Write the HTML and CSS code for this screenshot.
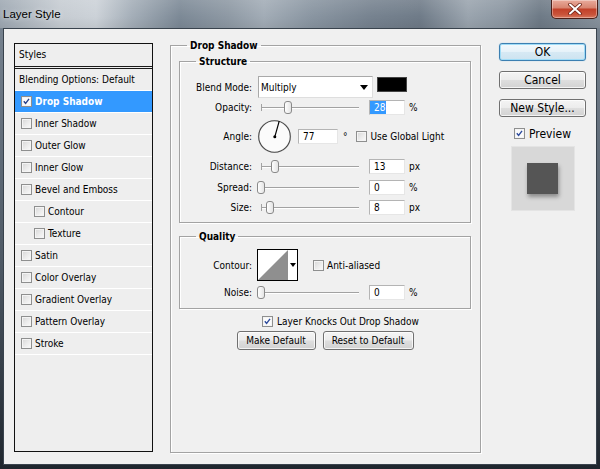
FILE: index.html
```html
<!DOCTYPE html>
<html lang="en">
<head>
<meta charset="utf-8">
<title>Layer Style</title>
<link rel="stylesheet" href="styles.css">
</head>
<body>
<div class="window">
  <div class="titlebar">
    <span class="title">Layer Style</span>
    <div class="close">
      <svg width="14" height="12" viewBox="0 0 14 12"><path d="M2 1.5 L12 10.5 M12 1.5 L2 10.5" stroke="#6a1f14" stroke-width="3.6" stroke-linecap="round"/><path d="M2 1.5 L12 10.5 M12 1.5 L2 10.5" stroke="#ffffff" stroke-width="2" stroke-linecap="round"/></svg>
    </div>
  </div>
  <div class="client">
    <div class="styles-panel">
      <div class="styles-head">Styles</div>
      <ul class="style-list">
        <li class="style-item plain">Blending Options: Default</li>
        <li class="style-item selected"><span class="cb checked"><svg viewBox="0 0 11 11"><path d="M2.2 5.2 L4.4 7.8 L8.6 2.2" fill="none" stroke="#26408b" stroke-width="1.7"/></svg></span>Drop Shadow</li>
        <li class="style-item"><span class="cb"></span>Inner Shadow</li>
        <li class="style-item"><span class="cb"></span>Outer Glow</li>
        <li class="style-item"><span class="cb"></span>Inner Glow</li>
        <li class="style-item"><span class="cb"></span>Bevel and Emboss</li>
        <li class="style-item indent"><span class="cb"></span>Contour</li>
        <li class="style-item indent"><span class="cb"></span>Texture</li>
        <li class="style-item"><span class="cb"></span>Satin</li>
        <li class="style-item"><span class="cb"></span>Color Overlay</li>
        <li class="style-item"><span class="cb"></span>Gradient Overlay</li>
        <li class="style-item"><span class="cb"></span>Pattern Overlay</li>
        <li class="style-item"><span class="cb"></span>Stroke</li>
      </ul>
    </div>

    <fieldset class="group main">
      <legend class="legend-main">Drop Shadow</legend>

      <fieldset class="group sub structure">
        <legend class="legend-sub">Structure</legend>
        <div class="row row-blend">
          <span class="lbl">Blend Mode:</span>
          <div class="select"><span>Multiply</span><span class="arrow"></span></div>
          <span class="swatch"></span>
        </div>
        <div class="row row-slider r-opacity">
          <span class="lbl">Opacity:</span>
          <div class="slider"><span class="thumb" style="left:23px"></span></div>
          <div class="num"><span class="sel">28</span></div>
          <span class="unit">%</span>
        </div>
        <div class="row row-angle">
          <span class="lbl">Angle:</span>
          <svg class="dial" width="35" height="35" viewBox="0 0 35 35"><circle cx="17.5" cy="17.5" r="16.6" fill="#c9c9c9"/><circle cx="17.5" cy="17.5" r="15.8" fill="#fbfbfb" stroke="#4a4a4a" stroke-width="1.1"/><line x1="17.8" y1="17.8" x2="22.2" y2="2.2" stroke="#000" stroke-width="1.2"/><circle cx="17.8" cy="17.8" r="1.5" fill="#000"/></svg>
          <div class="num num-angle">77</div>
          <span class="deg">°</span>
          <span class="cb cb-global"></span>
          <span class="cb-text">Use Global Light</span>
        </div>
        <div class="row row-slider r-distance">
          <span class="lbl">Distance:</span>
          <div class="slider"><span class="thumb" style="left:10px"></span></div>
          <div class="num">13</div>
          <span class="unit">px</span>
        </div>
        <div class="row row-slider r-spread">
          <span class="lbl">Spread:</span>
          <div class="slider"><span class="thumb" style="left:-4px"></span></div>
          <div class="num">0</div>
          <span class="unit">%</span>
        </div>
        <div class="row row-slider r-size">
          <span class="lbl">Size:</span>
          <div class="slider"><span class="thumb" style="left:5px"></span></div>
          <div class="num">8</div>
          <span class="unit">px</span>
        </div>
      </fieldset>

      <fieldset class="group sub quality">
        <legend class="legend-sub">Quality</legend>
        <div class="row row-contour">
          <span class="lbl">Contour:</span>
          <div class="contour">
            <svg width="30" height="30" viewBox="0 0 30 30"><rect width="30" height="30" fill="#fff"/><polygon points="0,30 30,0 30,30" fill="#8f8f8f"/></svg>
            <span class="contour-drop"><span class="arrow small"></span></span>
          </div>
          <span class="cb cb-anti"></span>
          <span class="cb-text">Anti-aliased</span>
        </div>
        <div class="row row-slider r-noise">
          <span class="lbl">Noise:</span>
          <div class="slider"><span class="thumb" style="left:-4px"></span></div>
          <div class="num">0</div>
          <span class="unit">%</span>
        </div>
      </fieldset>

      <div class="row knocks">
        <span class="cb checked"><svg viewBox="0 0 11 11"><path d="M2.2 5.2 L4.4 7.8 L8.6 2.2" fill="none" stroke="#2c4a9c" stroke-width="1.7"/></svg></span>
        <span class="cb-text">Layer Knocks Out Drop Shadow</span>
      </div>
      <div class="defaults">
        <button class="btn btn-make">Make Default</button>
        <button class="btn btn-reset">Reset to Default</button>
      </div>
    </fieldset>

    <div class="side">
      <button class="btn big ok">OK</button>
      <button class="btn big">Cancel</button>
      <button class="btn big">New Style...</button>
      <div class="preview-row">
        <span class="cb checked"><svg viewBox="0 0 11 11"><path d="M2.2 5.2 L4.4 7.8 L8.6 2.2" fill="none" stroke="#2c4a9c" stroke-width="1.7"/></svg></span>
        <span class="preview-text">Preview</span>
      </div>
      <div class="preview-box"><div class="preview-square"></div></div>
    </div>
  </div>
</div>
</body>
</html>
```

FILE: styles.css
```css
* { box-sizing: border-box; }

html, body {
  margin: 0;
  padding: 0;
}

body {
  width: 600px;
  height: 469px;
  overflow: hidden;
  font-family: "DejaVu Sans Condensed", "DejaVu Sans", sans-serif;
  font-size: 10px;
  color: #000;
  background: #2b333c;
}

.window {
  width: 600px;
  height: 469px;
  display: flex;
  flex-direction: column;
  background: linear-gradient(to bottom, #7b8794 0%, #4f5a66 55%, #1f262e 100%);
}

/* ---------- title bar ---------- */
.titlebar {
  flex: none;
  height: 28px;
  display: flex;
  justify-content: space-between;
  align-items: flex-start;
  background:
    linear-gradient(to bottom, rgba(255,255,255,0.12), rgba(255,255,255,0) 60%, rgba(0,0,0,0.06)),
    linear-gradient(90deg, #9ea8b2 0%, #c6ccd2 10%, #ccd2d8 16%, #a4aeb8 22%, #7c8996 30%, #8e99a4 38%, #a2acb6 44%, #8995a1 52%, #76828f 62%, #6f7b88 70%, #9aa4ae 78%, #8c97a2 84%, #6e7a86 90%, #87929d 100%);
}

.title {
  margin: 7px 0 0 3px;
  font-family: "Liberation Sans", Arial, sans-serif;
  font-size: 11.5px;
  line-height: 14px;
  color: #000;
  text-shadow: 0 0 5px rgba(255,255,255,0.7);
}

.close {
  width: 47px;
  height: 19px;
  margin-right: 2px;
  display: flex;
  align-items: center;
  justify-content: center;
  border: 1px solid #4b1f18;
  border-top: none;
  border-radius: 0 0 5px 5px;
  background: linear-gradient(to bottom, #e9ab9c 0%, #d88672 42%, #c2412a 52%, #c9533a 80%, #d8785e 100%);
  box-shadow: inset 0 0 0 1px rgba(255,255,255,0.35);
}

/* ---------- client area ---------- */
.client {
  flex: none;
  height: 437px;
  margin: 0 3px;
  border: 1px solid #39434d;
  background: #f0f0f0;
  display: flex;
  align-items: flex-start;
  padding: 10px 0 0 10px;
}

/* ---------- styles list ---------- */
.styles-panel {
  flex: none;
  width: 139px;
  height: 409px;
  margin-top: 4px;
  border: 1px solid #111;
  background: #eeeeee;
}

.styles-head {
  height: 25px;
  line-height: 22px;
  padding-left: 4px;
  border-bottom: 3px double #1a1a1a;
}

.style-list {
  list-style: none;
  margin: 0;
  padding: 0;
}

.style-item {
  height: 22px;
  display: flex;
  align-items: center;
  padding-left: 6px;
  border-bottom: 1px solid #ffffff;
  white-space: nowrap;
}

.style-item.plain { padding-left: 4px; }
.style-item.indent { padding-left: 19px; }

.style-item.selected {
  background: #3399ff;
  color: #fff;
  font-weight: bold;
}

.style-item .cb { margin-right: 3px; }

/* checkbox */
.cb {
  flex: none;
  display: inline-block;
  width: 11px;
  height: 11px;
  border: 1px solid #8e8f8f;
  background: linear-gradient(135deg, #d6d6d6 0%, #ececec 55%, #fafafa 100%);
  box-shadow: inset 0 0 0 1px #f4f4f4;
}

.cb svg {
  display: block;
  width: 9px;
  height: 9px;
}

.cb.checked {
  background: #fbfbfb;
}

.cb-text { white-space: nowrap; }

/* ---------- group boxes ---------- */
.group {
  margin: 0;
  min-width: 0;
  border: 1px solid #a3a3a3;
  box-shadow: 1px 1px 0 #ffffff, inset 1px 1px 0 #ffffff;
}

.group legend {
  font-weight: bold;
  line-height: 13px;
  height: 13px;
  padding: 0 3px;
  white-space: nowrap;
}

.main {
  flex: none;
  width: 311px;
  height: 414px;
  margin-left: 17px;
  padding: 3px 9px 0 8px;
}

.legend-main { margin-left: 8px; }
.legend-sub { margin-left: 16px; }

.sub { width: 292px; }

.structure { padding: 8px 0 7px 0; }

.quality {
  margin-top: 7px;
  padding: 6px 0 8px 0;
}

/* ---------- rows ---------- */
.row {
  display: flex;
  align-items: center;
  white-space: nowrap;
}

.lbl {
  flex: none;
  width: 72px;
  text-align: right;
}

.row-blend { height: 22px; }

.select {
  flex: none;
  width: 115px;
  height: 22px;
  margin-left: 6px;
  padding: 0 4px 0 2px;
  display: flex;
  align-items: center;
  justify-content: space-between;
  background: #fff;
  border: 1px solid;
  border-color: #a9a9a9 #dedede #dedede #a9a9a9;
}

.arrow {
  display: inline-block;
  width: 0;
  height: 0;
  border-top: 5px solid #000;
  border-left: 4px solid transparent;
  border-right: 4px solid transparent;
}

.arrow.small {
  border-top-width: 4px;
  border-left-width: 3px;
  border-right-width: 3px;
}

.swatch {
  flex: none;
  align-self: flex-start;
  width: 30px;
  height: 15px;
  margin: 1px 0 0 4px;
  background: #000;
  border: 1px solid #444;
}

.row-slider { height: 15px; }
.r-opacity { margin-top: 2px; }
.row-angle { height: 35px; margin-top: 4px; }
.r-distance { margin-top: 5px; }
.r-spread { margin-top: 6px; }
.r-size { margin-top: 5px; }
.r-noise { margin-top: 4px; }

.slider {
  flex: none;
  position: relative;
  width: 98px;
  height: 15px;
  margin-left: 9px;
}

.slider::before {
  content: "";
  position: absolute;
  left: 0;
  right: 0;
  top: 7px;
  height: 1px;
  background: #a2a2a2;
  box-shadow: 0 1px 0 #ffffff;
}

.slider::after {
  content: "";
  position: absolute;
  left: 0;
  top: 4px;
  width: 1px;
  height: 7px;
  background: #a2a2a2;
}

.thumb {
  position: absolute;
  top: 1px;
  width: 8px;
  height: 13px;
  border: 1px solid #8a8a8a;
  border-radius: 3px;
  background: linear-gradient(to right, #ffffff, #e4e4e4);
  z-index: 1;
}

.num {
  flex: none;
  width: 36px;
  height: 15px;
  margin-left: 10px;
  padding-left: 4px;
  line-height: 13px;
  background: #fff;
  border: 1px solid;
  border-color: #b4b4b4 #e6e6e6 #e6e6e6 #b4b4b4;
}

.num .sel {
  display: inline-block;
  margin-left: -4px;
  padding: 0 1px 0 4px;
  background: #3399ff;
  color: #fff;
}

.unit { margin-left: 4px; }

.dial {
  flex: none;
  margin-left: 5px;
}

.num-angle {
  width: 40px;
  margin-left: 6px;
}

.deg { margin-left: 5px; }

.cb-global { margin-left: 8px; }
.cb-global + .cb-text { margin-left: 4px; }

.row-contour { height: 32px; }

.contour {
  flex: none;
  display: flex;
  width: 41px;
  height: 32px;
  margin-left: 5px;
  border: 1px solid #000;
  background: #fff;
}

.contour svg { display: block; }

.contour-drop {
  flex: 1;
  display: flex;
  align-items: center;
  justify-content: center;
}

.cb-anti { margin-left: 15px; }
.cb-anti + .cb-text { margin-left: 3px; }

.knocks {
  height: 13px;
  margin: 6px 0 0 83px;
}

.knocks .cb-text { margin-left: 4px; }

.defaults {
  display: flex;
  justify-content: center;
  gap: 7px;
  margin-top: 3px;
}

/* ---------- buttons ---------- */
.btn {
  font-family: "DejaVu Sans Condensed", "DejaVu Sans", sans-serif;
  font-size: 10px;
  color: #000;
  height: 19px;
  padding: 0;
  border: 1px solid #707070;
  border-radius: 3px;
  background: linear-gradient(to bottom, #f4f4f4 0%, #ececec 48%, #dedede 52%, #d2d2d2 100%);
  box-shadow: inset 0 0 0 1px rgba(255,255,255,0.75);
}

.btn-make { width: 79px; }
.btn-reset { width: 91px; }

.side {
  flex: none;
  width: 87px;
  margin: 4px 0 0 18px;
  display: flex;
  flex-direction: column;
  align-items: center;
}

.btn.big {
  width: 87px;
  height: 18px;
  font-size: 12px;
  line-height: 14px;
  margin-bottom: 10px;
}

.btn.ok {
  border-color: #3c7fb1;
  box-shadow: inset 0 0 0 1px #9fdcf7, 0 0 1px #7fc4ea;
  background: linear-gradient(to bottom, #f3f9fc 0%, #e6f2f9 48%, #d6e9f4 52%, #cde3f0 100%);
}

.preview-row {
  height: 13px;
  display: flex;
  align-items: center;
  font-size: 12px;
}

.preview-text { margin-left: 4px; }

.preview-box {
  width: 64px;
  height: 65px;
  margin-top: 6px;
  display: flex;
  align-items: center;
  justify-content: center;
  background: #d8d8d8;
  border: 1px solid #e4e4e4;
}

.preview-square {
  width: 31px;
  height: 31px;
  background: #555555;
  box-shadow: 1px 3px 4px rgba(0,0,0,0.35);
}
```
